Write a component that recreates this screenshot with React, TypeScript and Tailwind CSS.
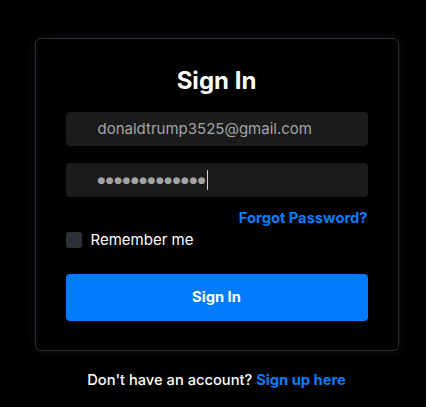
export default function App() {
  return (
    <div
      className="min-h-[407px] bg-black pt-[38px] pl-[7px] flex flex-col items-center"
      style={{ fontFamily: "Inter, 'Noto Sans', sans-serif" }}
    >
      <div className="w-[364px] rounded-md border border-[#2b2d3a] bg-black px-[30px] pt-[26px] pb-[29px] shadow-[0_0_12px_rgba(90,95,120,0.15)]">
        <h1 className="text-center text-[24px] leading-8 font-bold text-white">Sign In</h1>

        <div className="mt-[15px] flex h-[34px] items-center rounded bg-[#1b1b1b] pl-8 text-[15px] text-[#a3a3a3]">
          donaldtrump3525@gmail.com
        </div>

        <div className="mt-[17px] flex h-[34px] items-center rounded bg-[#1b1b1b] pl-8 text-[#a3a3a3]">
          <span className="text-[9px] leading-none tracking-[0.5px]" style={{ fontFamily: "'DejaVu Sans', sans-serif" }}>
            ●●●●●●●●●●●●●
          </span>
          <span className="ml-[1px] h-[20px] w-px bg-[#cfcfcf]" />
        </div>

        <div className="mt-[11px] text-right text-[14.7px] leading-5 font-bold text-[#0a7cff]">
          Forgot Password?
        </div>

        <label className="mt-[2px] flex h-5 items-center gap-[9px]">
          <span className="h-4 w-4 rounded-[3px] bg-[#2d3039]" />
          <span className="text-[15px] leading-5 text-white">Remember me</span>
        </label>

        <button className="mt-[24px] h-[47px] w-full rounded bg-[#007bff] text-[14.7px] font-bold text-white">
          Sign In
        </button>
      </div>

      <p className="mt-[19px] text-[14.7px] leading-5 font-medium text-white">
        Don't have an account? <span className="font-bold text-[#0a7cff]">Sign up here</span>
      </p>
    </div>
  );
}
